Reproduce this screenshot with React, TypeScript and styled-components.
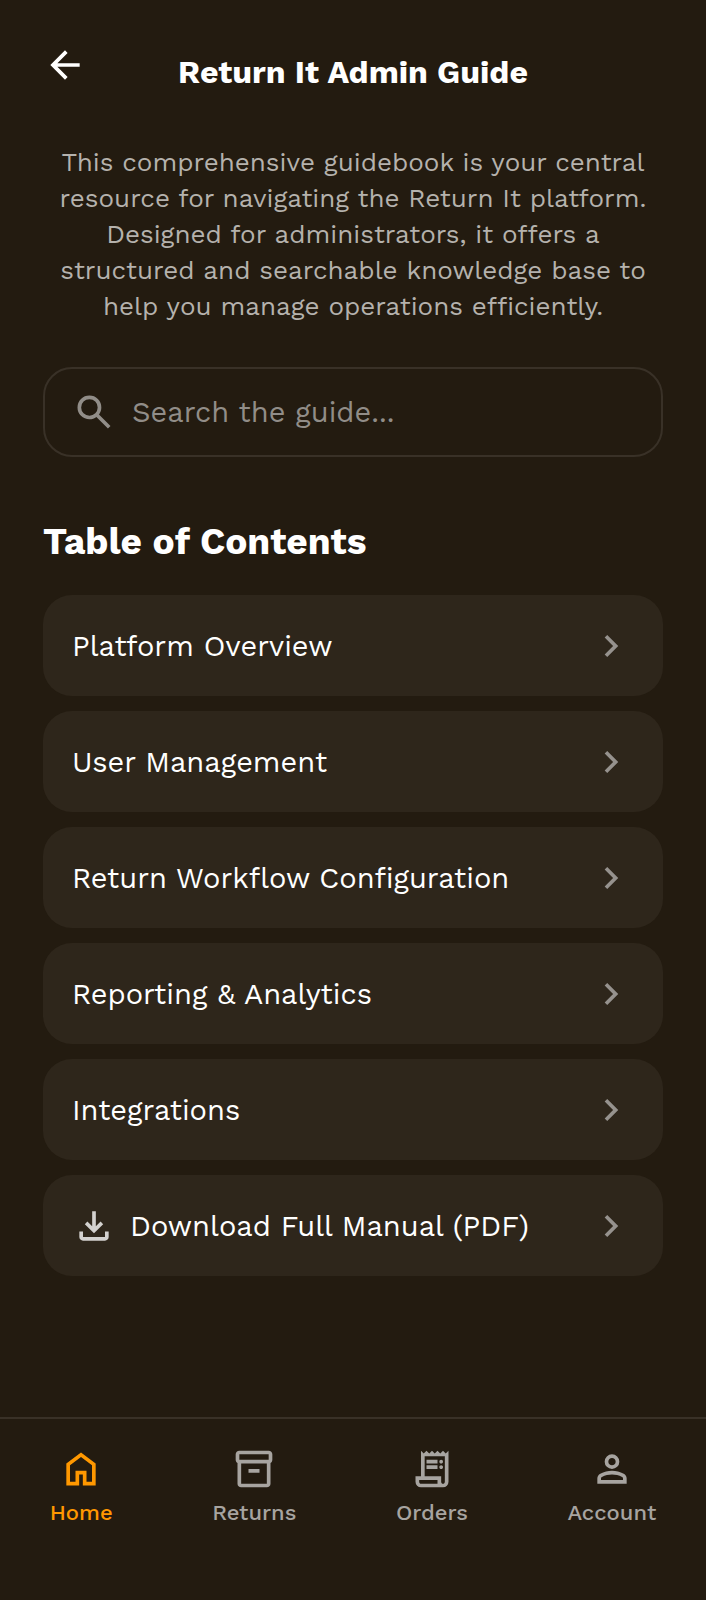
import React from "react";
import styled, { createGlobalStyle } from "styled-components";

const GlobalStyle = createGlobalStyle`
  *, *::before, *::after { box-sizing: border-box; }
  body {
    margin: 0;
    background: #231b10;
    color: #ffffff;
    font-family: "Work Sans", Inter, sans-serif;
  }
`;

const Page = styled.div`
  display: flex;
  flex-direction: column;
  min-height: 100vh;
`;

const Header = styled.header`
  display: grid;
  grid-template-columns: 44px 1fr 44px;
  align-items: start;
  padding: 43px 43px 29px;
`;

const BackButton = styled.button`
  display: flex;
  padding: 0;
  border: 0;
  background: none;
  color: inherit;
  cursor: pointer;
`;

const Title = styled.h1`
  margin: 0;
  padding-top: 8px;
  font-size: 32px;
  line-height: 42px;
  font-weight: 700;
  text-align: center;
`;

const Main = styled.main`
  flex: 1;
  padding: 22px 43px 43px;
`;

const Intro = styled.p`
  margin: 0 auto;
  max-width: 600px;
  color: #b5b2ad;
  font-size: 26px;
  line-height: 36px;
  text-align: center;
`;

const SearchField = styled.label`
  display: flex;
  align-items: center;
  gap: 16px;
  height: 90px;
  margin-top: 43px;
  padding: 0 27px;
  border: 2px solid #393127;
  border-radius: 29px;
  color: #918d88;
`;

const SearchInput = styled.input`
  flex: 1;
  min-width: 0;
  padding: 0;
  border: 0;
  outline: 0;
  background: none;
  color: #ffffff;
  font: inherit;
  font-size: 29px;
  line-height: 42px;
  &::placeholder { color: #918d88; opacity: 1; }
`;

const SectionTitle = styled.h2`
  margin: 63px 0 31px;
  font-size: 37px;
  line-height: 44px;
  font-weight: 700;
`;

const List = styled.ul`
  display: flex;
  flex-direction: column;
  gap: 15px;
  margin: 0;
  padding: 0;
  list-style: none;
`;

const ChapterLink = styled.a`
  display: flex;
  align-items: center;
  gap: 14px;
  min-height: 101px;
  padding: 0 29px;
  border-radius: 29px;
  background: #2e261b;
  color: #ffffff;
  font-size: 29px;
  line-height: 44px;
  text-decoration: none;
`;

const ChapterName = styled.span`
  flex: 1;
`;

const TabBar = styled.nav`
  display: flex;
  justify-content: space-around;
  min-height: 183px;
  padding-top: 28px;
  border-top: 2px solid #393127;
`;

const Tab = styled.a<{ $active?: boolean }>`
  display: flex;
  flex-direction: column;
  align-items: center;
  gap: 8px;
  color: ${(p) => (p.$active ? "#ff9800" : "#a7a4a0")};
  font-size: 22px;
  line-height: 28px;
  font-weight: 500;
  text-decoration: none;
`;

const Glyph = styled.svg<{ $tone?: string }>`
  flex: none;
  width: 44px;
  height: 44px;
  fill: ${(p) => p.$tone ?? "currentColor"};
`;

const icons = {
  back: "m313-440 224 224-57 56-320-320 320-320 57 56-224 224h487v80H313Z",
  search:
    "M784-120 532-372q-30 24-69 38t-83 14q-109 0-184.5-75.5T120-580q0-109 75.5-184.5T380-840q109 0 184.5 75.5T640-580q0 44-14 83t-38 69l252 252-56 56ZM380-400q75 0 127.5-52.5T560-580q0-75-52.5-127.5T380-760q-75 0-127.5 52.5T200-580q0 75 52.5 127.5T380-400Z",
  chevron: "M504-480 320-664l56-56 240 240-240 240-56-56 184-184Z",
  download:
    "M480-320 280-520l56-58 104 104v-326h80v326l104-104 56 58-200 200ZM240-160q-33 0-56.5-23.5T160-240v-120h80v120h480v-120h80v120q0 33-23.5 56.5T720-160H240Z",
  home: "M240-200h120v-240h240v240h120v-360L480-740 240-560v360Zm-80 80v-480l320-240 320 240v480H520v-240h-80v240H160Z",
  returns:
    "M200-80q-33 0-56.5-23.5T120-160v-451q-18-11-29-28.5T80-680v-120q0-33 23.5-56.5T160-880h640q33 0 56.5 23.5T880-800v120q0 23-11 40.5T840-611v451q0 33-23.5 56.5T760-80H200Zm0-520v440h560v-440H200Zm-40-80h640v-120H160v120Zm200 280h240v-80H360v80Z",
  orders:
    "M240-80q-50 0-85-35t-35-85v-120h120v-560l60 60 60-60 60 60 60-60 60 60 60-60 60 60 60-60 60 60 60-60v680q0 50-35 85t-85 35H240Zm480-80q17 0 28.5-11.5T760-200v-560H320v440h360v120q0 17 11.5 28.5T720-160ZM360-600v-80h240v80H360Zm0 120v-80h240v80H360Zm320-120q-17 0-28.5-11.5T640-640q0-17 11.5-28.5T680-680q17 0 28.5 11.5T720-640q0 17-11.5 28.5T680-600Zm0 120q-17 0-28.5-11.5T640-520q0-17 11.5-28.5T680-560q17 0 28.5 11.5T720-520q0 17-11.5 28.5T680-480ZM240-160h360v-80H200v40q0 17 11.5 28.5T240-160Z",
  account:
    "M480-480q-66 0-113-47t-47-113q0-66 47-113t113-47q66 0 113 47t47 113q0 66-47 113t-113 47ZM160-160v-112q0-34 17.5-62.5T224-378q62-31 126-46.5T480-440q66 0 130 15.5T736-378q29 15 46.5 43.5T800-272v112H160Zm80-80h480v-32q0-11-5.5-20T700-306q-54-27-109-40.5T480-360q-56 0-111 13.5T260-306q-9 5-14.5 14t-5.5 20v32Zm240-320q33 0 56.5-23.5T560-640q0-33-23.5-56.5T480-720q-33 0-56.5 23.5T400-640q0 33 23.5 56.5T480-560Z",
};

type IconName = keyof typeof icons;

const Icon = ({ name, tone }: { name: IconName; tone?: string }) => (
  <Glyph viewBox="0 -960 960 960" aria-hidden="true" $tone={tone}>
    <path d={icons[name]} />
  </Glyph>
);

const chapters: { label: string; icon?: IconName }[] = [
  { label: "Platform Overview" },
  { label: "User Management" },
  { label: "Return Workflow Configuration" },
  { label: "Reporting & Analytics" },
  { label: "Integrations" },
  { label: "Download Full Manual (PDF)", icon: "download" },
];

const tabs: { label: string; icon: IconName }[] = [
  { label: "Home", icon: "home" },
  { label: "Returns", icon: "returns" },
  { label: "Orders", icon: "orders" },
  { label: "Account", icon: "account" },
];

export default function App() {
  return (
    <Page>
      <GlobalStyle />
      <Header>
        <BackButton type="button" aria-label="Back">
          <Icon name="back" />
        </BackButton>
        <Title>Return It Admin Guide</Title>
      </Header>
      <Main>
        <Intro>
          This comprehensive guidebook is your central resource for navigating
          the Return It platform. Designed for administrators, it offers a
          structured and searchable knowledge base to help you manage operations
          efficiently.
        </Intro>
        <SearchField>
          <Icon name="search" />
          <SearchInput
            type="text"
            aria-label="Search the guide"
            placeholder="Search the guide..."
          />
        </SearchField>
        <SectionTitle>Table of Contents</SectionTitle>
        <List>
          {chapters.map(({ label, icon }) => (
            <li key={label}>
              <ChapterLink href="#">
                {icon && <Icon name={icon} tone="#d3d1cf" />}
                <ChapterName>{label}</ChapterName>
                <Icon name="chevron" tone="#96928e" />
              </ChapterLink>
            </li>
          ))}
        </List>
      </Main>
      <TabBar>
        {tabs.map(({ label, icon }, i) => (
          <Tab key={label} href="#" $active={i === 0}>
            <Icon name={icon} />
            {label}
          </Tab>
        ))}
      </TabBar>
    </Page>
  );
}
